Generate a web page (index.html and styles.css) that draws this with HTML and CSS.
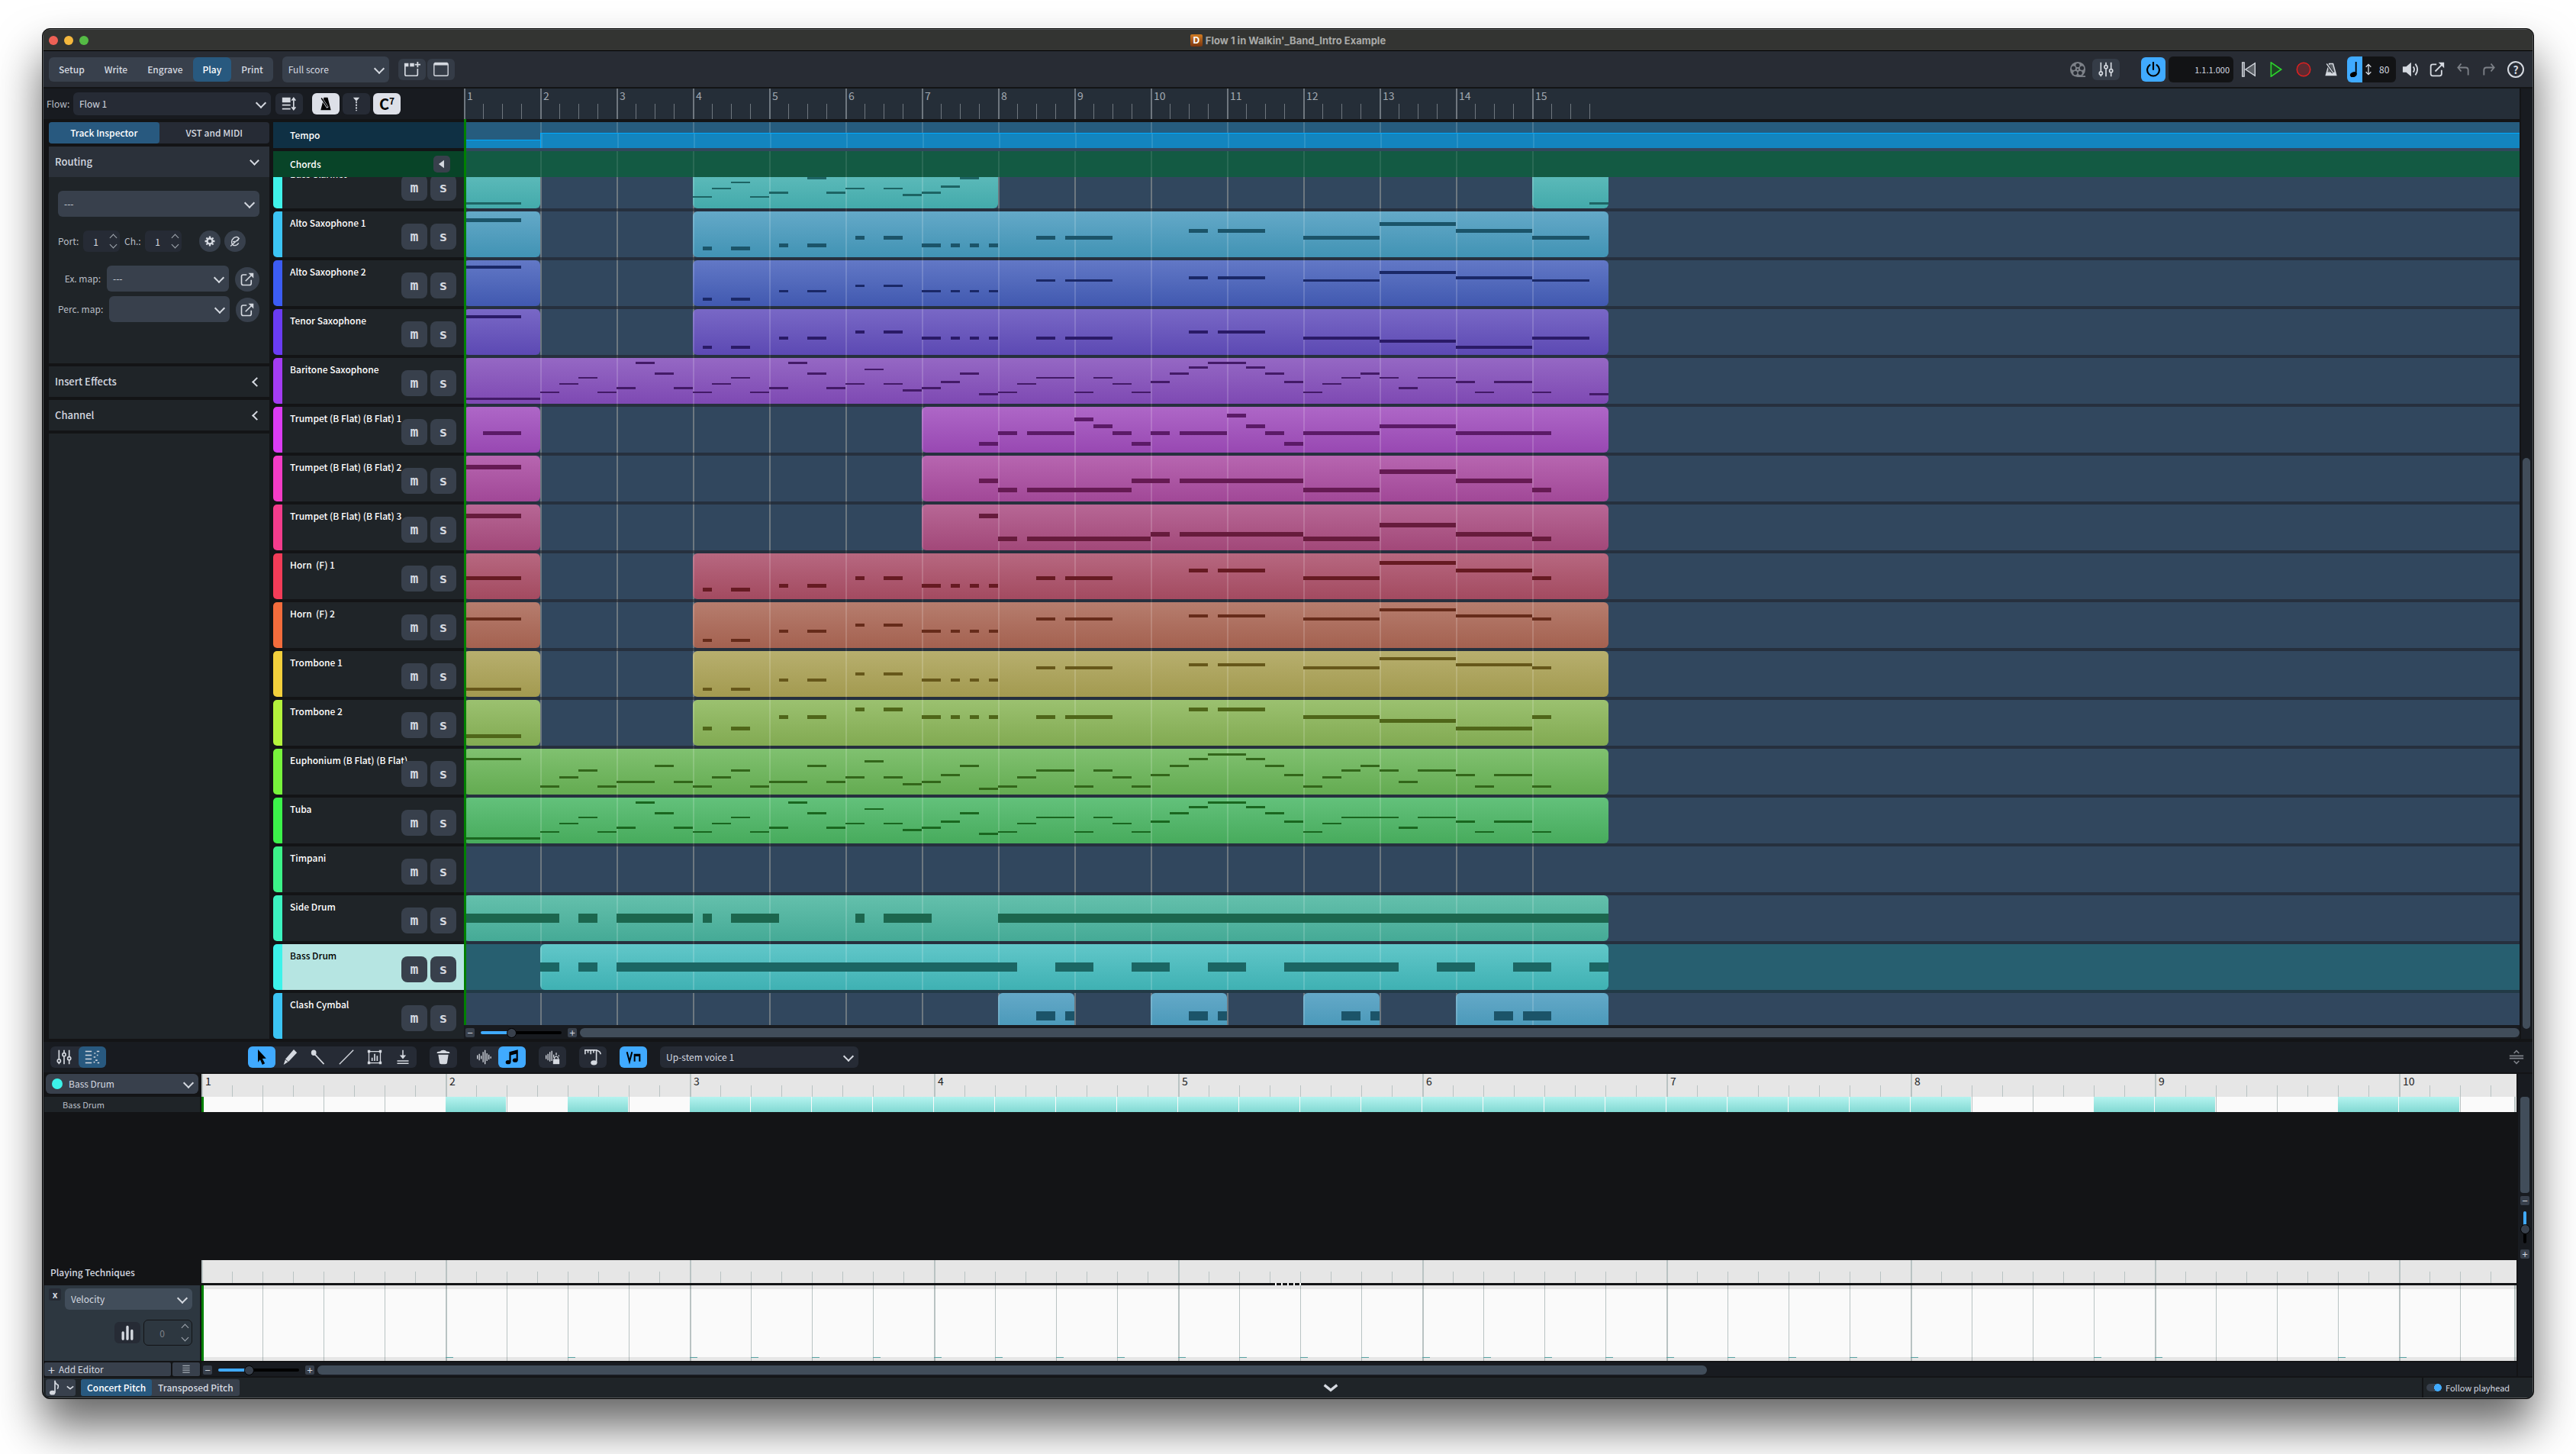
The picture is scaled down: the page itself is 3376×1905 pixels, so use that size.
FILE: index.html
```html
<!DOCTYPE html>
<html lang="en">
<head>
    <meta charset="UTF-8">
    <title>Flow 1 in Walkin'_Band_Intro Example</title>
    <link rel="stylesheet" href="styles.css">
</head>
<body>
    <!-- Icon set -->
    <svg class="sprite" aria-hidden="true">
        <symbol id="i-tab-add" viewBox="0 0 24 24"><path d="M2 5v14a2 2 0 0 0 2 2h14a2 2 0 0 0 2-2v-8" fill="none" stroke="currentColor" stroke-width="1.800"/><path d="M1 3h6v5H1zM9 3h6v5H9z"/><path d="M20 1v8M16 5h8" stroke="currentColor" stroke-width="2"/></symbol>
        <symbol id="i-window" viewBox="0 0 24 24"><rect x="2" y="3" width="20" height="18" rx="2" fill="none" stroke="currentColor" stroke-width="1.500"/><path d="M3 2h18l1 4H2z"/></symbol>
        <symbol id="i-track-height" viewBox="0 0 24 24"><path d="M1 2h13v8H1zM1 13h13v2H1zM1 19h13v2H1z"/><path d="M19 4v16M16 7l3-4 3 4M16 17l3 4 3-4" fill="none" stroke="currentColor" stroke-width="2"/></symbol>
        <symbol id="i-metronome" viewBox="0 0 24 24"><path d="M9 2h6l5 20H4z"/><path d="M5 3l10 15" stroke="#dde0e8" stroke-width="3.500"/><path d="M5 3l9.500 14" stroke="currentColor" stroke-width="1.800"/></symbol>
        <symbol id="i-metronome-line" viewBox="0 0 24 24"><path d="M9 3h6l5 18H4zM5 17h14" fill="#5b6066" stroke="currentColor" stroke-width="1.800"/><path d="M5 19h14" stroke="currentColor" stroke-width="4"/><path d="M5 3l10 14" stroke="#282c34" stroke-width="4"/><path d="M5 3l10 14" stroke="currentColor" stroke-width="1.600"/></symbol>
        <symbol id="i-playhead" viewBox="0 0 24 24"><path d="M7 2h10l-5 6z"/><path d="M12 8v15" stroke="currentColor" stroke-width="2" stroke-dasharray="3 1.500"/></symbol>
        <symbol id="i-left" viewBox="0 0 24 24"><path d="M17 3v18L5 12z"/></symbol>
        <symbol id="i-gear" viewBox="0 0 24 24"><circle cx="12" cy="12" r="6" fill="none" stroke="currentColor" stroke-width="4"/><path d="M12 1v5M12 18v5M1 12h5M18 12h5M4.200 4.200l3.500 3.500M16.300 16.300l3.500 3.500M4.200 19.800l3.500-3.500M16.300 7.700l3.500-3.500" stroke="currentColor" stroke-width="4"/></symbol>
        <symbol id="i-edit-e" viewBox="0 0 24 24"><path d="M7 13q12 0 13-6c0-5-6-6-11-2-6 5-6 13-1 16 5 2 10-1 12-5M2 23L22 5" fill="none" stroke="currentColor" stroke-width="2.400"/></symbol>
        <symbol id="i-open" viewBox="0 0 24 24"><path d="M11 4H5a3 3 0 0 0-3 3v12a3 3 0 0 0 3 3h11a3 3 0 0 0 3-3v-6M9 15L20 4" fill="none" stroke="currentColor" stroke-width="2.200"/><path d="M14 1h9v9z"/></symbol>
        <symbol id="i-reel" viewBox="0 0 24 24"><circle cx="12" cy="12" r="11"/><path d="M12 22h11" stroke="currentColor" stroke-width="2"/><g fill="#282c34"><circle cx="12" cy="6" r="2.800"/><circle cx="6" cy="10" r="2.800"/><circle cx="18" cy="10" r="2.800"/><circle cx="8.500" cy="17" r="2.800"/><circle cx="15.500" cy="17" r="2.800"/><circle cx="12" cy="12" r="1.200"/></g></symbol>
        <symbol id="i-mixer" viewBox="0 0 24 24"><path d="M4 1v14M4 20v3M12 1v5M12 11v12M20 1v10M20 16v7" stroke="currentColor" stroke-width="2"/><g fill="none" stroke="currentColor" stroke-width="2"><circle cx="4" cy="18" r="2.500"/><circle cx="12" cy="8" r="2.500"/><circle cx="20" cy="14" r="2.500"/></g></symbol>
        <symbol id="i-power" viewBox="0 0 24 24"><path d="M6.500 5a9.500 9.500 0 1 0 11 0M12 1v11" fill="none" stroke="currentColor" stroke-width="2.600" stroke-linecap="round"/></symbol>
        <symbol id="i-rewind" viewBox="0 0 24 24"><path d="M2 1h3v22H2zM22 2v20L7 12z" fill="#5b6066" stroke="currentColor" stroke-width="1.600"/></symbol>
        <symbol id="i-play" viewBox="0 0 24 24"><path d="M4 1l16 11L4 23z" fill="#1d4523" stroke="#2cd22c" stroke-width="2"/></symbol>
        <symbol id="i-record" viewBox="0 0 24 24"><circle cx="12" cy="12" r="10.500" fill="#5c2b31" stroke="#e02020" stroke-width="1.800"/></symbol>
        <symbol id="i-quarter" viewBox="0 0 24 24"><ellipse cx="10" cy="20" rx="5.500" ry="4" transform="rotate(-25 10 20)"/><path d="M14 19V0" stroke="currentColor" stroke-width="2.200"/></symbol>
        <symbol id="i-updown" viewBox="0 0 24 24"><path d="M12 2v20M7 7l5-5 5 5M7 17l5 5 5-5" fill="none" stroke="currentColor" stroke-width="2"/></symbol>
        <symbol id="i-speaker" viewBox="0 0 24 24"><path d="M1 8h5l7-6v20l-7-6H1z"/><path d="M16 8q3 4 0 8M19 4q6 8 0 16" fill="none" stroke="currentColor" stroke-width="2"/></symbol>
        <symbol id="i-undo" viewBox="0 0 24 24"><path d="M9 3L4 9l5 6M4 9h12q4 0 4 4v8" fill="none" stroke="currentColor" stroke-width="2.200"/></symbol>
        <symbol id="i-redo" viewBox="0 0 24 24"><path d="M15 3l5 6-5 6M20 9H8q-4 0-4 4v8" fill="none" stroke="currentColor" stroke-width="2.200"/></symbol>
        <symbol id="i-keyed" viewBox="0 0 24 24"><path d="M1 3h10M1 9h10M1 15h10M1 21h10M19 3h4M15 6h2M14 12h3M19 9h2M17 17h3M14 20h2M20 21h3" stroke="currentColor" stroke-width="2"/></symbol>
        <symbol id="i-arrow" viewBox="0 0 24 24"><path d="M6 0l13 14-6 .5L17 22l-4 2-3.500-8L6 20z"/></symbol>
        <symbol id="i-pencil" viewBox="0 0 24 24"><path d="M18 0l5 5L10 19l-8 5 3-9z"/><path d="M4 15l6 5" stroke="#262b35"/></symbol>
        <symbol id="i-stick" viewBox="0 0 24 24"><ellipse cx="5" cy="5" rx="4" ry="4.500"/><path d="M7 8l14 15" stroke="currentColor" stroke-width="2"/></symbol>
        <symbol id="i-line" viewBox="0 0 24 24"><path d="M1 23L23 1" stroke="currentColor" stroke-width="1.600"/></symbol>
        <symbol id="i-transform" viewBox="0 0 24 24"><path d="M3 3h18v18H3z" fill="none" stroke="currentColor" stroke-width="1.500"/><path d="M1 1h4v4H1zM19 1h4v4h-4zM1 19h4v4H1zM19 19h4v4h-4z"/><path d="M8 18v-5M12 18V7M16 18v-8" stroke="currentColor" stroke-width="2"/></symbol>
        <symbol id="i-quantize" viewBox="0 0 24 24"><path d="M12 1v12M3 18h18M3 22h18" stroke="currentColor" stroke-width="1.800"/><path d="M7 9h10l-5 6z"/></symbol>
        <symbol id="i-trash" viewBox="0 0 24 24"><path d="M2 5q0-2 5-2 1-2 5-2t5 2q5 0 5 2v1H2zM4 8h16l-2 13q0 2-3 2H9q-3 0-3-2z"/></symbol>
        <symbol id="i-wave" viewBox="0 0 24 24"><path d="M2 9v6M5 7v10M8 10v5M11 4v16M14 1v22M17 6v12M20 8v8M23 11v3" stroke="currentColor" stroke-width="1.600"/></symbol>
        <symbol id="i-notes" viewBox="0 0 24 24"><ellipse cx="6" cy="20" rx="4" ry="3.200"/><ellipse cx="17" cy="17" rx="4" ry="3.200"/><path d="M9 20V5l11-3v15M9 8l11-3" fill="none" stroke="currentColor" stroke-width="2.600"/></symbol>
        <symbol id="i-wave-lock" viewBox="0 0 24 24"><path d="M2 9v6M5 7v10M8 4v15M11 2v16M14 8v5M18 5v4M22 9v2" stroke="currentColor" stroke-width="1.600"/><path d="M13 15h10v8H13z"/><path d="M15 15v-2q3-4 6 0v2" fill="none" stroke="currentColor" stroke-width="1.600"/></symbol>
        <symbol id="i-ruler-note" viewBox="0 0 24 24"><path d="M0 2h16M1 2v6M5 2v4M9 2v6M13 2v4M17 1v19M17 2q6 2 6 6" fill="none" stroke="currentColor" stroke-width="1.800"/><ellipse cx="13.500" cy="20" rx="4.500" ry="3.500"/></symbol>
        <symbol id="i-bowing" viewBox="0 0 24 24"><path d="M2 4l4 15L10 4M14 19V8h8v11M14 9.500h8" fill="none" stroke="currentColor" stroke-width="2.400"/></symbol>
        <symbol id="i-expand" viewBox="0 0 24 24"><path d="M1 10h22M1 14h22M8 6l4-4 4 4M8 18l4 4 4-4" fill="none" stroke="currentColor" stroke-width="2"/></symbol>
        <symbol id="i-bars" viewBox="0 0 24 24"><path d="M5 22V12M12 22V3M19 22V9" stroke="currentColor" stroke-width="4" stroke-linecap="round"/></symbol>
        <symbol id="i-menu" viewBox="0 0 24 24"><path d="M4 4h16M4 9h16M4 14h16M4 19h16" stroke="currentColor" stroke-width="2"/></symbol>
        <symbol id="i-eighth" viewBox="0 0 24 24"><ellipse cx="8" cy="20" rx="4.500" ry="3.500"/><path d="M12 20V1q0 5 5 7 1 3-1 6" fill="none" stroke="currentColor" stroke-width="2"/></symbol>
        <symbol id="i-chevron" viewBox="0 0 24 24"><path d="M2 8l10 8 10-8" fill="none" stroke="currentColor" stroke-width="4"/></symbol>
    </svg>

    <div class="window">
        <header class="titlebar">
            <div class="lights"><span class="light red"></span><span class="light amber"></span><span class="light green"></span></div>
            <div class="doc-title"><span class="app-icon">D</span>Flow 1 in Walkin'_Band_Intro Example</div>
        </header>

        <div class="toolbar">
            <nav class="modes">
                <button>Setup</button><button>Write</button><button>Engrave</button><button class="active">Play</button><button>Print</button>
            </nav>
            <span class="select layout-select"><select aria-label="Layout"><option>Full score</option></select></span>
            <div class="pair">
                <button class="icon-btn" aria-label="New tab"><svg class="ico big"><use href="#i-tab-add"/></svg></button>
                <button class="icon-btn" aria-label="Window"><svg class="ico big"><use href="#i-window"/></svg></button>
            </div>
            <div class="transport">
                <button class="plain dim" aria-label="Video"><svg class="ico big"><use href="#i-reel"/></svg></button>
                <button class="icon-btn mixer" aria-label="Mixer"><svg class="ico"><use href="#i-mixer"/></svg></button>
                <button class="power" aria-label="Activate"><svg class="ico"><use href="#i-power"/></svg></button>
                <output class="time">1.1.1.000</output>
                <div class="transport-keys">
                    <button class="plain" aria-label="Rewind"><svg class="ico"><use href="#i-rewind"/></svg></button>
                    <button class="plain" aria-label="Play"><svg class="ico"><use href="#i-play"/></svg></button>
                    <button class="plain" aria-label="Record"><svg class="ico"><use href="#i-record"/></svg></button>
                    <button class="plain" aria-label="Click"><svg class="ico"><use href="#i-metronome-line"/></svg></button>
                </div>
                <div class="tempo-box"><span class="beat"><svg class="ico"><use href="#i-quarter"/></svg></span><svg class="ico"><use href="#i-updown"/></svg><span>80</span></div>
                <button class="plain" aria-label="Volume"><svg class="ico big"><use href="#i-speaker"/></svg></button>
                <button class="plain" aria-label="Open"><svg class="ico"><use href="#i-open"/></svg></button>
                <button class="plain dim" aria-label="Undo"><svg class="ico"><use href="#i-undo"/></svg></button>
                <button class="plain dim" aria-label="Redo"><svg class="ico"><use href="#i-redo"/></svg></button>
                <button class="help" aria-label="Help">?</button>
            </div>
        </div>

        <main class="upper">
            <div class="left">
                <div class="flow-row">
                    <label for="flow">Flow:</label>
                    <span class="select"><select id="flow"><option>Flow 1</option></select></span>
                    <button class="icon-btn dark" aria-label="Track height"><svg class="ico"><use href="#i-track-height"/></svg></button>
                    <div class="view-btns">
                        <button class="icon-btn light-btn" aria-label="Tempo track"><svg class="ico"><use href="#i-metronome"/></svg></button>
                        <button class="icon-btn dark" aria-label="Markers"><svg class="ico"><use href="#i-playhead"/></svg></button>
                        <button class="icon-btn light-btn chord-btn">C<sup>7</sup></button>
                    </div>
                </div>
                <div class="columns">
                    <aside class="inspector">
                        <div class="tabs"><button class="active">Track Inspector</button><button>VST and MIDI</button></div>
                        <section class="panel">
                            <h2 class="open">Routing</h2>
                            <div class="routing">
                                <span class="select"><select aria-label="Instance"><option>---</option></select></span>
                                <div class="port-row">
                                    <label class="port" for="port">Port:</label><span class="spin"><input id="port" type="number" value="1"></span>
                                    <label class="channel" for="channel">Ch.:</label><span class="spin"><input id="channel" type="number" value="1"></span>
                                    <div class="rounds">
                                        <button class="round small" aria-label="Endpoint setup"><svg class="ico tiny"><use href="#i-gear"/></svg></button>
                                        <button class="round small" aria-label="Edit instrument"><svg class="ico tiny"><use href="#i-edit-e"/></svg></button>
                                    </div>
                                </div>
                                <div class="map-row">
                                    <label for="exmap">Ex. map:</label><span class="select"><select id="exmap"><option>---</option></select></span>
                                    <button class="round" aria-label="Edit expression map"><svg class="ico small"><use href="#i-open"/></svg></button>
                                </div>
                                <div class="map-row">
                                    <label for="percmap">Perc. map:</label><span class="select"><select id="percmap"><option></option></select></span>
                                    <button class="round" aria-label="Edit percussion map"><svg class="ico small"><use href="#i-open"/></svg></button>
                                </div>
                            </div>
                        </section>
                        <section class="panel"><h2>Insert Effects</h2></section>
                        <section class="panel"><h2>Channel</h2></section>
                        <section class="panel filler"></section>
                    </aside>
                    <div class="heads">
                        <div class="head-strip tempo">Tempo</div>
                        <div class="head-strip chords">Chords<button class="audition" aria-label="Hear chords"><svg class="ico tiny"><use href="#i-left"/></svg></button></div>
                        <div class="scroller"><div class="rows" id="heads"></div></div>
                    </div>
                </div>
            </div>

            <div class="timeline">
                <div class="ruler" id="ruler"></div>
                <div class="arrange">
                    <div class="tempo-lane"><i></i><b></b></div>
                    <div class="chord-lane"></div>
                    <div class="lanes"><div class="rows" id="lanes"></div></div>
                    <div class="playhead"></div>
                </div>
                <div class="zoom-row">
                    <button class="step">−</button><input type="range" value="37" aria-label="Horizontal zoom"><button class="step">+</button>
                    <div class="hscroll"></div>
                </div>
            </div>
            <div class="vscroll"><span></span></div>
        </main>

        <div class="lower-toolbar">
            <div class="group">
                <button aria-label="Mixer"><svg class="ico"><use href="#i-mixer"/></svg></button>
                <button class="navy" aria-label="Key Editor"><svg class="ico"><use href="#i-keyed"/></svg></button>
            </div>
            <div class="group tools">
                <button class="on" aria-label="Select"><svg class="ico"><use href="#i-arrow"/></svg></button>
                <button aria-label="Draw"><svg class="ico"><use href="#i-pencil"/></svg></button>
                <button aria-label="Drumstick"><svg class="ico"><use href="#i-stick"/></svg></button>
                <button aria-label="Line"><svg class="ico"><use href="#i-line"/></svg></button>
                <button aria-label="Transform"><svg class="ico"><use href="#i-transform"/></svg></button>
                <button aria-label="Quantize"><svg class="ico"><use href="#i-quantize"/></svg></button>
            </div>
            <div class="group"><button aria-label="Delete"><svg class="ico"><use href="#i-trash"/></svg></button></div>
            <div class="group">
                <button aria-label="Played durations"><svg class="ico"><use href="#i-wave"/></svg></button>
                <button class="on" aria-label="Notated durations"><svg class="ico"><use href="#i-notes"/></svg></button>
            </div>
            <div class="group"><button aria-label="Lock durations"><svg class="ico"><use href="#i-wave-lock"/></svg></button></div>
            <div class="group"><button aria-label="Snap"><svg class="ico big"><use href="#i-ruler-note"/></svg></button></div>
            <div class="group"><button class="on" aria-label="Playing techniques"><svg class="ico"><use href="#i-bowing"/></svg></button></div>
            <span class="select voice-select"><select aria-label="Voice"><option>Up-stem voice 1</option></select></span>
            <button class="plain dim expand" aria-label="Resize"><svg class="ico"><use href="#i-expand"/></svg></button>
        </div>

        <section class="editor">
            <div class="editor-left">
                <div class="instrument">
                    <span class="dot"></span>
                    <span class="select"><select aria-label="Instrument"><option>Bass Drum</option></select></span>
                </div>
                <div class="kit-row">Bass Drum</div>
                <div class="void"></div>
                <div class="techniques">Playing Techniques</div>
                <div class="velocity">
                    <button class="close">x</button>
                    <span class="select"><select aria-label="Editor"><option>Velocity</option></select></span>
                    <div class="velocity-tools">
                        <button class="icon-btn dark" aria-label="Histogram"><svg class="ico"><use href="#i-bars"/></svg></button>
                        <span class="spin outlined"><input type="number" value="0" aria-label="Velocity" disabled></span>
                    </div>
                </div>
                <div class="add-row"><button class="add"><span>+</span>Add Editor</button><button class="menu" aria-label="Menu"><svg class="ico tiny"><use href="#i-menu"/></svg></button></div>
            </div>
            <div class="editor-main">
                <div class="ruler2" id="ruler2"></div>
                <div class="drum-lane" id="drum-lane"></div>
                <div class="void"></div>
                <div class="ruler2"></div>
                <div class="grip"><span></span></div>
                <div class="velocity-lane" id="velocity-lane"></div>
                <div class="zoom-row">
                    <button class="step">−</button><input type="range" value="37" aria-label="Editor zoom"><button class="step">+</button>
                    <div class="hscroll partial"></div>
                </div>
            </div>
            <div class="editor-right">
                <div class="thumb"></div>
                <button class="step">−</button>
                <input class="vertical" type="range" value="58" aria-label="Vertical zoom">
                <button class="step">+</button>
            </div>
        </section>

        <footer class="status">
            <button class="note-value" aria-label="Note value"><svg class="ico"><use href="#i-eighth"/></svg><svg class="ico micro"><use href="#i-chevron"/></svg></button>
            <div class="pitch"><button class="active">Concert Pitch</button><button>Transposed Pitch</button></div>
            <button class="plain collapse" aria-label="Hide panel"><svg class="ico"><use href="#i-chevron"/></svg></button>
            <label class="follow"><input type="checkbox" checked>Follow playhead</label>
        </footer>
    </div>

    <script src="script.js"></script>
</body>
</html>
```
FILE: styles.css
```css
* {
    box-sizing: border-box;
}

body {
    margin: 0;
    padding: 37px 55px 73px;
    min-height: 100vh;
    display: flex;
    flex-direction: column;
    background: #fff;
    color: #d5d9e0;
    font: 12px/18px "Noto Sans CJK SC", "Noto Sans", sans-serif;
    overflow-x: hidden;
}

button, select, input, output {
    font: inherit;
    color: inherit;
}

button {
    border: 0;
    padding: 0;
    background: none;
    cursor: pointer;
}

.sprite {
    position: absolute;
    width: 0;
    height: 0;
}

.ico { width: 20px; height: 20px; fill: currentColor; display: block; flex: none; }
.ico.big { width: 22px; height: 22px; }
.ico.small { width: 18px; height: 18px; }
.ico.tiny { width: 14px; height: 14px; }
.ico.micro { width: 10px; height: 10px; }

.window {
    flex: 1;
    display: flex;
    flex-direction: column;
    background: #131416;
    border: 1px solid #000;
    border-radius: 10px;
    box-shadow: inset 0 0 0 1px #55585a, 0 36px 60px rgba(0, 0, 0, .6);
    padding: 1px;
    overflow: hidden;
}

/* Title bar */
.titlebar {
    height: 28px;
    display: grid;
    grid-template-columns: 1fr auto 1fr;
    align-items: center;
    background: #333432;
    border-bottom: 1px solid #000;
}

.lights { display: flex; gap: 8px; padding-left: 7px; }
.light { width: 12px; height: 12px; border-radius: 50%; }
.red { background: #ee6155; }
.amber { background: #f5b83d; }
.green { background: #55bb45; }

.doc-title {
    display: flex;
    gap: 4px;
    align-items: center;
    font: 700 13px/18px Inter, sans-serif;
    color: #a9aaa8;
}

.app-icon {
    width: 16px;
    height: 16px;
    border-radius: 2px;
    background: linear-gradient(#d37c22, #78350f);
    color: #fff;
    font: 700 12px/16px Inter, sans-serif;
    text-align: center;
}

/* Shared controls */
.select {
    position: relative;
    display: block;
    height: 34px;
    border-radius: 6px;
    background: #38404c;
}

.select select {
    appearance: none;
    width: 100%;
    height: 100%;
    border: 0;
    background: none;
    padding: 0 24px 0 8px;
    outline: 0;
}

.select::after {
    content: "";
    position: absolute;
    right: 8px;
    top: 50%;
    width: 8px;
    height: 8px;
    margin-top: -6px;
    border: solid currentColor;
    border-width: 0 2px 2px 0;
    transform: rotate(45deg);
    pointer-events: none;
}

.icon-btn {
    width: 36px;
    height: 28px;
    border-radius: 6px;
    background: #353c47;
    display: flex;
    align-items: center;
    justify-content: center;
}

.icon-btn.dark { background: #262b35; }
.icon-btn.light-btn { background: #dde0e8; color: #000; }

.chord-btn { font-size: 20px; line-height: 20px; font-weight: 700; }
.chord-btn sup { font-size: 12px; line-height: 12px; align-self: flex-start; padding-top: 4px; }

.plain { display: flex; }
.dim { color: #7d8188; }

.round {
    width: 32px;
    height: 32px;
    border-radius: 50%;
    background: #38404c;
    display: flex;
    align-items: center;
    justify-content: center;
}

.round.small { width: 28px; height: 28px; }

.spin {
    position: relative;
    width: 48px;
    height: 28px;
    border-radius: 6px;
    background: #262b35;
}

.spin input {
    width: 100%;
    height: 100%;
    border: 0;
    background: none;
    text-align: center;
    appearance: textfield;
    padding: 0;
}

.spin::before, .spin::after {
    content: "";
    position: absolute;
    right: 5px;
    width: 6px;
    height: 6px;
    border: solid #a3aab2;
    border-width: 1px 0 0 1px;
    transform: rotate(45deg);
}

.spin::before { top: 6px; }
.spin::after { bottom: 6px; transform: rotate(225deg); }

.step {
    width: 12px;
    height: 12px;
    border-radius: 2px;
    background: #38404c;
    font-size: 13px;
    line-height: 12px;
    flex: none;
}

input[type=range] {
    appearance: none;
    width: 106px;
    height: 4px;
    margin: 0 8px;
    border-radius: 2px;
    background: linear-gradient(90deg, #40aaff 37%, #000 37%);
}

input[type=range]::-webkit-slider-thumb {
    appearance: none;
    width: 13px;
    height: 13px;
    border: 1px solid #000;
    border-radius: 50%;
    background: #38404c;
}

/* Top toolbar */
.toolbar {
    height: 47px;
    display: flex;
    align-items: center;
    padding: 0 11px 0 7px;
    background: #282c34;
    margin-bottom: 2px;
}

.modes, .pitch {
    display: flex;
    border-radius: 6px;
    background: #38404c;
    font-weight: 500;
}

.modes button { height: 32px; padding: 0 13px; border-radius: 6px; }
.modes .active, .pitch .active, .tabs .active { background: #28597f; color: #fff; }

.layout-select { width: 140px; margin: 0 12px; }

.pair { display: flex; gap: 2px; }

.transport { margin-left: auto; display: flex; align-items: center; gap: 14px; }
.mixer { margin-left: -6px; }

.power {
    width: 32px;
    height: 32px;
    margin-left: 14px;
    border-radius: 6px;
    background: #40aaff;
    color: #000;
    display: grid;
    place-items: center;
}

.time {
    width: 85px;
    height: 34px;
    margin-left: -10px;
    padding-right: 5px;
    border-radius: 6px;
    background: #121315;
    font-size: 11px;
    line-height: 34px;
    text-align: right;
}

.transport-keys { display: flex; gap: 16px; margin: 0 -3px 0 -4px; }

.tempo-box {
    display: flex;
    align-items: center;
    width: 64px;
    height: 34px;
    margin-right: -6px;
    border-radius: 6px;
    background: #121315;
    overflow: hidden;
}

.tempo-box .beat { width: 20px; height: 34px; background: #40aaff; color: #000; display: grid; place-items: center; }
.tempo-box > .ico { width: 16px; margin-right: 6px; }

.help {
    width: 22px;
    height: 22px;
    border: 2px solid currentColor;
    border-radius: 50%;
    font-size: 14px;
    font-weight: 700;
    line-height: 18px;
}

/* Upper area */
.upper { display: flex; }
.left { width: 551px; flex: none; }

.flow-row {
    height: 40px;
    display: flex;
    align-items: center;
    gap: 6px;
    padding-left: 4px;
    background: #181b20;
    margin-bottom: 4px;
}

.flow-row .select { width: 259px; height: 30px; background: #262b35; margin-left: 1px; }
.flow-row label { width: 28px; color: #b9bec6; }
.view-btns { display: flex; gap: 4px; margin-left: 6px; }

.columns { display: flex; }

.inspector {
    width: 289px;
    margin: 0 5px 0 7px;
    display: flex;
    flex-direction: column;
    gap: 4px;
}

.tabs { display: flex; border-radius: 4px; background: #262b35; font-weight: 500; }
.tabs button { flex: 1; height: 28px; border-radius: 4px; }

.panel { background: #1f2428; }
.filler { flex: 1; }

.panel h2 {
    position: relative;
    height: 40px;
    margin: 0;
    padding: 0 8px;
    font-size: 13px;
    line-height: 40px;
    font-weight: 500;
}

.panel h2.open { background: #2b313a; }

.panel h2::after {
    content: "";
    position: absolute;
    right: 12px;
    top: 16px;
    width: 7px;
    height: 7px;
    border: solid currentColor;
    border-width: 0 0 2px 2px;
    transform: rotate(45deg);
}

.panel h2.open::after { right: 15px; top: 14px; transform: rotate(-45deg); }

.routing { height: 244px; padding: 18px 13px 18px 12px; }
.routing label { color: #b9bec6; white-space: nowrap; }

.port-row { display: flex; align-items: center; gap: 6px; margin: 18px 0; }
.port { width: 27px; }
.channel { width: 21px; }
.rounds { display: flex; gap: 5px; margin-left: 17px; }

.map-row { display: flex; align-items: center; gap: 8px; margin-bottom: 6px; }
.map-row label { flex: 1; text-align: right; }
.map-row .select { width: 160px; }
.map-row .round { margin-top: 2px; }

.heads { width: 250px; }

.head-strip {
    height: 34px;
    margin-bottom: 4px;
    padding: 0 18px 0 22px;
    display: flex;
    align-items: center;
    justify-content: space-between;
    font-weight: 500;
    color: #fff;
}

.head-strip.tempo { background: #0f3044; }
.head-strip.chords { background: #084428; margin-bottom: 0; }

.audition {
    width: 22px;
    height: 22px;
    border-radius: 5px;
    background: #38404c;
    color: #d5d9e0;
    display: grid;
    place-items: center;
}

.scroller { overflow: hidden; }

/* the list is scrolled a little way down */
.rows { margin-top: -19px; }

.track {
    height: 60px;
    margin-bottom: 4px;
    display: flex;
    gap: 4px;
    padding: 0 10px;
    border-left: 12px solid var(--bar);
    border-radius: 5px 0 0 5px;
    background: #1f2428;
    color: #fff;
}

.track:last-child { margin-bottom: 0; }

.track .name { flex: 1; width: 0; padding-top: 6px; font-weight: 500; white-space: pre; }

.track button {
    width: 34px;
    height: 34px;
    margin-top: 16px;
    border-radius: 8px;
    background: #38404c;
    color: #d5d9e0;
    font: 700 18px/32px "DejaVu Sans Mono", monospace;
}

.track.selected { background: #b6e5e2; color: #000; }

/* Timeline */
.timeline {
    flex: 1;
    min-width: 0;
    display: flex;
    flex-direction: column;
}

.ruler {
    height: 40px;
    display: flex;
    background: #252e38;
    margin-bottom: 4px;
    overflow: hidden;
}

.ruler span {
    width: 100px;
    flex: none;
    padding-left: 2px;
    font-size: 14px;
    color: #a3aab2;
    border-left: 2px solid #6f777f;
    background: repeating-linear-gradient(90deg, transparent 0 23px, #6f777f 23px 24px, transparent 24px 25px) 0 20px / 96px 20px no-repeat;
}

.arrange {
    position: relative;
    flex: 1 1 0;
    min-height: 0;
    display: flex;
    flex-direction: column;
    background: #31475e;
}

.playhead {
    position: absolute;
    left: 0;
    top: -4px;
    bottom: 0;
    width: 3px;
    background: #008000;
}

.tempo-lane {
    height: 34px;
    flex: none;
    display: flex;
    align-items: flex-end;
    margin-bottom: 4px;
    background: repeating-linear-gradient(90deg, #4a7792 0 2px, transparent 2px 100px) 0 0 / 1500px 100% no-repeat #265c7e;
}

.tempo-lane i, .tempo-lane b { border-top: 1px solid #00aaff; background: repeating-linear-gradient(90deg, #2b93c7 0 2px, transparent 2px 100px) 0 0 / 1400px 100% no-repeat #1385bf; }
.tempo-lane i { width: 100px; height: 11px; }
.tempo-lane b { flex: 1; height: 20px; border-left: 1px solid #00aaff; }

.chord-lane {
    height: 34px;
    flex: none;
    background: repeating-linear-gradient(90deg, #2a6a55 0 2px, transparent 2px 100px) 0 0 / 1500px 100% no-repeat #135a43;
}

.lanes {
    flex: 1;
    min-height: 0;
    overflow: hidden;
    background: repeating-linear-gradient(90deg, #6d7880 0 2px, transparent 2px 100px) 0 0 / 1500px 100% no-repeat;
}

.lane {
    position: relative;
    height: 64px;
    border-bottom: 4px solid rgba(32, 34, 42, .6);
}

.lane.selected { background: #275f70; }

.clip {
    position: absolute;
    top: 0;
    height: 60px;
    border-radius: 6px;
    background:
        repeating-linear-gradient(90deg, rgba(255, 255, 255, .16) 0 2px, transparent 2px 100px),
        linear-gradient(var(--top), var(--bottom));
}

.lane svg {
    position: absolute;
    left: 0;
    top: 0;
    width: 1500px;
    height: 60px;
    fill: var(--note);
}

.zoom-row {
    height: 18px;
    display: flex;
    align-items: center;
    padding: 4px 0 2px 2px;
    background: #181b20;
}

.hscroll { flex: 1; height: 12px; margin-left: 4px; border-radius: 6px; background: #414d5a; }
.hscroll.partial { flex: 0 1 1821px; }

.vscroll {
    width: 15px;
    margin-left: 2px;
    padding: 484px 3px 13px 2px;
    display: flex;
    background: #181b20;
}

.vscroll span { flex: 1; border-radius: 5px; background: #414d5a; }

/* Lower toolbar */
.lower-toolbar {
    height: 40px;
    display: flex;
    align-items: center;
    gap: 17px;
    margin: 4px 0 2px;
    padding: 0 11px 0 9px;
    background: #181b20;
}

.group { display: flex; gap: 1px; border-radius: 6px; background: #262b35; }
.group button { width: 36px; height: 28px; border-radius: 6px; display: grid; place-items: center; }
.group .on { background: #40aaff; color: #000; }
.group .navy { background: #28597f; }
.tools { margin-left: 169px; }
.voice-select { width: 260px; height: 28px; background: #262b35; }
.expand { margin-left: auto; }

/* Key editor */
.editor { flex: 1; display: flex; }

.editor-left {
    width: 204px;
    flex: none;
    margin: 0 2px 0 1px;
    display: flex;
    flex-direction: column;
}

.instrument { position: relative; height: 30px; padding: 0 2px; }
.instrument .select { height: 26px; }
.instrument select { padding-left: 30px; }
.dot { position: absolute; left: 10px; top: 6px; width: 14px; height: 14px; border-radius: 50%; background: #3cf3ea; z-index: 1; }

.kit-row { height: 20px; padding-left: 24px; background: #1f2428; font-size: 11px; line-height: 20px; color: #b9bec6; }
.void { flex: 1; min-height: 194px; }
.techniques { height: 33px; padding-left: 8px; line-height: 31px; font-weight: 500; }

.velocity {
    height: 99px;
    margin-bottom: 2px;
    padding: 4px 10px 0 6px;
    display: grid;
    grid-template-columns: 16px 1fr;
    grid-template-rows: 28px 46px;
    gap: 7px 5px;
    background: #2d3740;
}

.velocity .select { height: 28px; background: #414d5a; }
.close { width: 16px; height: 16px; border-radius: 3px; background: #262b35; font-weight: 700; line-height: 14px; }
.velocity-tools { grid-column: 1 / 3; display: flex; align-items: center; justify-content: flex-end; gap: 4px; }
.velocity-tools .icon-btn { width: 34px; }
.outlined { width: 64px; height: 34px; border: 1px solid #131416; background: none; color: #7d8188; }

.add-row { height: 18px; display: flex; gap: 2px; }
.add, .menu { background: #38404c; border-radius: 2px; }
.add { flex: 1; display: flex; align-items: center; gap: 5px; padding-left: 5px; }
.add span { font-size: 16px; }
.menu { width: 36px; display: grid; place-items: center; color: #a3aab2; }

.editor-main { flex: 1; min-width: 0; display: flex; flex-direction: column; }

.ruler2 {
    height: 30px;
    display: flex;
    overflow: hidden;
    color: #1b1c1e;
    background:
        repeating-linear-gradient(90deg, #b9c3c3 0 2px, transparent 2px 320px),
        repeating-linear-gradient(90deg, #b9c3c3 0 1px, transparent 1px 40px) 0 15px no-repeat,
        #e6e6e6;
}

.ruler2 span { width: 320px; flex: none; padding-left: 5px; font-size: 14px; }

.drum-lane, .velocity-lane {
    position: relative;
    overflow: hidden;
    border-left: 3px solid #008000;
    background:
        repeating-linear-gradient(90deg, #b9c3c3 0 2px, transparent 2px 320px) -3px 0,
        repeating-linear-gradient(90deg, #b9c3c3 0 1px, transparent 1px 80px) -3px 0,
        #fafafa;
}

.drum-lane { height: 20px; }

.drum-note {
    position: absolute;
    top: 0;
    width: 80px;
    height: 20px;
    margin-left: -3px;
    border-right: 1px solid #fafafa;
    background: linear-gradient(#b4f3ef, #82d9d3);
}

.grip { height: 3px; display: flex; justify-content: center; }
.grip span { width: 34px; margin-right: 186px; background: repeating-linear-gradient(90deg, #fff 0 2px, transparent 2px 8px); }

.velocity-lane { height: 99px; margin-bottom: 2px; box-shadow: inset 0 5px rgba(0, 0, 0, .08), inset 0 -5px rgba(0, 0, 0, .08); }
.hit { position: absolute; bottom: 4px; width: 10px; height: 1px; margin-left: -3px; background: #58a3a3; }

.editor-right {
    width: 19px;
    margin-left: 2px;
    padding: 30px 4px 154px 3px;
    display: flex;
    flex-direction: column;
    background: #181b20;
}

.thumb { flex: 1; margin-bottom: 4px; border-radius: 4px; background: #414d5a; }
input.vertical { writing-mode: vertical-lr; width: 4px; height: 42px; margin: 8px 4px; background: linear-gradient(#40aaff 50%, #000 50%); }

/* Status bar */
.status {
    height: 26px;
    display: flex;
    align-items: center;
    gap: 7px;
    margin-top: 2px;
    padding-left: 3px;
    background: #1f2428;
}

.note-value { width: 39px; height: 22px; display: flex; align-items: center; justify-content: space-around; background: #38404c; border-radius: 3px; }
.pitch { border-radius: 3px; }
.pitch button { height: 22px; padding: 0 8px; border-radius: 3px; }
.collapse { margin: 0 auto; }

.follow { width: 145px; height: 26px; display: flex; align-items: center; gap: 5px; border-left: 2px solid #131416; padding-left: 4px; font-size: 11px; }

.follow input {
    appearance: none;
    width: 20px;
    height: 10px;
    margin: 0;
    border-radius: 5px;
    background: radial-gradient(circle at 15px 5px, #40aaff 5px, #38404c 5px);
}
```
FILE: script.js
```javascript
const BEAT = 25;        // px per beat in the overview
const EDITOR_BEAT = 80; // px per beat in the key editor

// Notes are [start beat, end beat, y inside the lane]
const riff = (y, last) => [
    [12.5, 13, y[0]], [14, 15, y[0]],
    [16.5, 17, y[1]], [18, 19, y[1]],
    [20.5, 21, y[2]], [22, 23, y[2]],
    [24, 25, y[3]], [25.5, 26, y[3]], [26.5, 27, y[3]], [27.5, 28, y[3]],
    [30, 31, y[4]], [31.5, 34, y[4]],
    [38, 39, y[5]], [39.5, 42, y[5]],
    [44, 48, y[6]], [48, 52, y[7]], [52, 56, y[8]], [56, last, y[9]]
];

// One note per beat, from bar 2 on
const walk = ys => ys.map((y, i) => [4 + i, 5 + i, y]);

const bass = [
    44, 33, 25, 44, 38, 5, 19, 38, 44, 33, 25, 44, 38, 5, 19, 38, 33, 14, 33, 41, 38, 30, 19, 46,
    44, 33, 25, 25, 44, 25, 33, 44, 30, 19, 11, 5, 5, 11, 19, 30, 44, 33, 25, 19, 25, 38, 25, 25,
    30, 44, 30, 30, 44
];
const tubaBass = bass.map((y, i) => i === 43 ? 25 : y);
const euphBass = [
    48, 36, 27, 48, 42, 42, 21, 42, 48, 36, 27, 48, 42, 42, 21, 42, 36, 15, 36, 45, 42, 33, 21, 51,
    48, 36, 27, 27, 48, 27, 36, 48, 33, 21, 12, 6, 6, 12, 21, 33, 48, 36, 27, 21, 27, 42, 27, 27,
    33, 48, 33, 33, 48
];
const thin = [44, 33, 25, 14];
const hits = list => list.map(([a, b]) => [a, b, 24]);
const bassDrum = hits([[4, 5], [6, 7], [8, 29], [31, 33], [35, 37], [39, 41], [43, 49], [51, 53], [55, 57], [59, 60]]);

const tracks = [
    { name: "Bass Clarinet", bar: "#40f3ea", top: "#66c0bf", bottom: "#43aaab", note: "#1d6464", h: 3, thin,
      clips: [[0, 4], [12, 28], [56, 60]],
      notes: [[0, 3, 52], [12, 13, 44], [13, 14, 33], [14, 15, 25], [15, 16, 44], [16, 17, 38], [18, 19, 19], [19, 20, 38],
              [20, 21, 33], [22, 23, 33], [23, 24, 41], [24, 25, 38], [25, 26, 30], [26, 27, 19], [59, 60, 52]] },
    { name: "Alto Saxophone 1", bar: "#3cc4f3", top: "#64a9c8", bottom: "#4193b4", note: "#1b5469", h: 5,
      clips: [[0, 4], [12, 60]], notes: [[0, 3, 9], ...riff([46, 42, 32, 42, 32, 23, 32, 14, 23, 32], 59)] },
    { name: "Alto Saxophone 2", bar: "#3c5cf3", top: "#6278c6", bottom: "#4159b0", note: "#1a2867", h: 4, thin: [25, 39, 32],
      clips: [[0, 4], [12, 60]], notes: [[0, 3, 7], ...riff([49, 39, 32, 39, 25, 21, 25, 14, 21, 25], 59)] },
    { name: "Tenor Saxophone", bar: "#6a3cf3", top: "#7968c6", bottom: "#5c49b3", note: "#2a1a67", h: 4,
      clips: [[0, 4], [12, 60]], notes: [[0, 3, 8], ...riff([48, 36, 28, 36, 36, 28, 36, 40, 48, 36], 59)] },
    { name: "Baritone Saxophone", bar: "#a43cf3", top: "#9568c4", bottom: "#7e49b3", note: "#431a67", h: 3, thin,
      clips: [[0, 60]], notes: [[0, 4, 52], ...walk(bass), [59, 60, 46]] },
    { name: "Trumpet (B Flat) (B Flat) 1", bar: "#dc3cf3", top: "#ae67c7", bottom: "#9848b2", note: "#5b1a67", h: 5,
      clips: [[0, 4], [24, 60]],
      notes: [[1, 3, 32], [27, 28, 46], [28, 29, 32], [29.5, 32, 32], [32, 33, 14], [33, 34, 23], [34, 35, 32], [35, 36, 46],
              [36, 37, 32], [37.5, 40, 32], [40, 41, 9], [41, 42, 23], [42, 43, 32], [43, 44, 46], [44, 48, 32], [48, 52, 23], [52, 57, 32]] },
    { name: "Trumpet (B Flat) (B Flat) 2", bar: "#f33cc6", top: "#b766b0", bottom: "#a14897", note: "#651a53", h: 6,
      clips: [[0, 4], [24, 60]],
      notes: [[0, 3, 12], [27, 28, 30], [28, 29, 42], [29.5, 35, 42], [35, 37, 30], [37.5, 44, 30], [44, 48, 42], [48, 52, 18], [52, 56, 30], [56, 57, 42]] },
    { name: "Trumpet (B Flat) (B Flat) 3", bar: "#f33c8c", top: "#b76795", bottom: "#a24879", note: "#661b3c", h: 6,
      clips: [[0, 4], [24, 60]],
      notes: [[0, 3, 12], [27, 28, 12], [28, 29, 42], [29.5, 36, 42], [36, 37, 36], [37.5, 44, 36], [44, 48, 42], [48, 52, 24], [52, 56, 36], [56, 57, 42]] },
    { name: "Horn  (F) 1", bar: "#f33c58", top: "#b76880", bottom: "#a34a60", note: "#661a22", h: 5,
      clips: [[0, 4], [12, 60]], notes: [[0, 3, 30], ...riff([45, 40, 30, 40, 30, 20, 30, 10, 20, 30], 57)] },
    { name: "Horn  (F) 2", bar: "#f36c3c", top: "#b67d6e", bottom: "#a46150", note: "#662b1a", h: 4,
      clips: [[0, 4], [12, 60]], notes: [[0, 3, 20], ...riff([48, 36, 28, 36, 20, 16, 20, 8, 16, 20], 57)] },
    { name: "Trombone 1", bar: "#f3d03c", top: "#b7af6e", bottom: "#a39a50", note: "#66571a", h: 4,
      clips: [[0, 4], [12, 60]], notes: [[0, 3, 48], ...riff([48, 36, 28, 36, 20, 16, 20, 8, 16, 20], 57)] },
    { name: "Trombone 2", bar: "#b4f33c", top: "#9bc170", bottom: "#82aa52", note: "#4f6619", h: 5,
      clips: [[0, 4], [12, 60]], notes: [[0, 3, 45], ...riff([35, 20, 10, 20, 20, 10, 20, 25, 35, 20], 57)] },
    { name: "Euphonium (B Flat) (B Flat)", bar: "#78f33c", top: "#80c170", bottom: "#64ab51", note: "#33661a", h: 3,
      clips: [[0, 60]], notes: [[0, 3, 12], ...walk(euphBass)] },
    { name: "Tuba", bar: "#3cf34a", top: "#63c17b", bottom: "#47ab5c", note: "#1a661f", h: 3, thin,
      clips: [[0, 60]], notes: [[0, 4, 52], ...walk(tubaBass)] },
    { name: "Timpani", bar: "#3cf388", clips: [], notes: [] },
    { name: "Side Drum", bar: "#3cf3c0", top: "#64c0ac", bottom: "#45aa96", note: "#1c664e", h: 12,
      clips: [[0, 60]], notes: hits([[0, 5], [6, 7], [8, 12], [12.5, 13], [14, 16.5], [20.5, 21], [22, 24.5], [28, 60]]) },
    { name: "Bass Drum", bar: "#3cf3ea", top: "#61c7c9", bottom: "#3fb1b3", note: "#1b6664", h: 12, selected: true,
      clips: [[4, 60]], notes: bassDrum },
    { name: "Clash Cymbal", bar: "#3cc4f3", top: "#64a9c8", bottom: "#4193b4", note: "#1b5469", h: 12,
      clips: [[28, 32], [36, 40], [44, 48], [52, 60]],
      notes: hits([[30, 31], [31.5, 32], [38, 39], [39.5, 40], [46, 47], [47.5, 48], [54, 55], [55.5, 57]]) }
];

function head(t) {
    return `<div class="track${t.selected ? " selected" : ""}" style="--bar:${t.bar}">
        <span class="name">${t.name}</span><button>m</button><button>s</button></div>`;
}

function lane(t) {
    const clips = t.clips.map(([a, b]) =>
        `<div class="clip" style="left:${a * BEAT}px;width:${(b - a) * BEAT}px"></div>`).join("");
    const notes = t.notes.map(([a, b, y]) => {
        const x = Math.round(a * BEAT);
        const h = t.thin && t.thin.includes(y) ? t.h - 1 : t.h;
        return `<rect x="${x}" y="${y}" width="${Math.round(b * BEAT) - x}" height="${h}"/>`;
    }).join("");
    return `<div class="lane${t.selected ? " selected" : ""}" style="--top:${t.top};--bottom:${t.bottom};--note:${t.note}">
        ${clips}<svg>${notes}</svg></div>`;
}

function numbers(count) {
    return Array.from({ length: count }, (_, i) => `<span>${i + 1}</span>`).join("");
}

document.getElementById("heads").innerHTML = tracks.map(head).join("");
document.getElementById("lanes").innerHTML = tracks.map(lane).join("");
document.getElementById("ruler").innerHTML = numbers(15);
document.getElementById("ruler2").innerHTML = numbers(10);

// Key editor: one box per beat of the selected drum
let boxes = "";
let bars = "";
bassDrum.forEach(([a, b]) => {
    for (let beat = a; beat < b; beat++) {
        boxes += `<div class="drum-note" style="left:${beat * EDITOR_BEAT}px"></div>`;
        bars += `<div class="hit" style="left:${beat * EDITOR_BEAT}px"></div>`;
    }
});
document.getElementById("drum-lane").innerHTML = boxes;
document.getElementById("velocity-lane").innerHTML = bars;
```
